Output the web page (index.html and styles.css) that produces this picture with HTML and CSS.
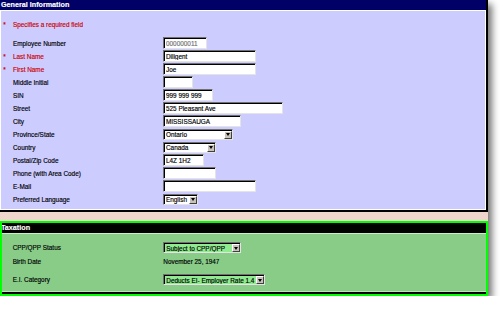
FILE: index.html
```html
<!DOCTYPE html>
<html>
<head>
<meta charset="utf-8">
<link rel="stylesheet" href="styles.css">
</head>
<body>
<div class="frame">
  <section class="gen">
    <div class="gen-head">General Information</div>
    <div class="gen-body">
      <div class="note"><span class="star">*</span>Specifies a required field</div>
      <div class="row"><span class="lbl"><span class="star"></span>Employee Number</span><input class="in w44 grey" value="000000011"></div>
      <div class="row"><span class="lbl red"><span class="star">*</span>Last Name</span><input class="in w93" value="Diligent"></div>
      <div class="row"><span class="lbl red"><span class="star">*</span>First Name</span><input class="in w93" value="Joe"></div>
      <div class="row"><span class="lbl"><span class="star"></span>Middle Initial</span><input class="in w30" value=""></div>
      <div class="row"><span class="lbl"><span class="star"></span>SIN</span><input class="in w50" value="999 999 999"></div>
      <div class="row"><span class="lbl"><span class="star"></span>Street</span><input class="in w120" value="525 Pleasant Ave"></div>
      <div class="row"><span class="lbl"><span class="star"></span>City</span><input class="in w78" value="MISSISSAUGA"></div>
      <div class="row"><span class="lbl"><span class="star"></span>Province/State</span><span class="sel w70"><span class="sel-text">Ontario</span><span class="sel-btn"></span></span></div>
      <div class="row"><span class="lbl"><span class="star"></span>Country</span><span class="sel w53"><span class="sel-text">Canada</span><span class="sel-btn"></span></span></div>
      <div class="row"><span class="lbl"><span class="star"></span>Postal/Zip Code</span><input class="in w41" value="L4Z 1H2"></div>
      <div class="row"><span class="lbl"><span class="star"></span>Phone (with Area Code)</span><input class="in w53" value=""></div>
      <div class="row"><span class="lbl"><span class="star"></span>E-Mail</span><input class="in w93" value=""></div>
      <div class="row"><span class="lbl"><span class="star"></span>Preferred Language</span><span class="sel w35"><span class="sel-text">English</span><span class="sel-btn"></span></span></div>
    </div>
  </section>
  <div class="gap"></div>
  <section class="tax">
    <div class="tax-head">Taxation</div>
    <div class="tax-body">
      <div class="trow"><span class="tlbl">CPP/QPP Status</span><span class="sel green w77"><span class="sel-text">Subject to CPP/QPP</span><span class="sel-btn"></span></span></div>
      <div class="trow"><span class="tlbl">Birth Date</span><span class="plain">November 25, 1947</span></div>
      <div class="trow third"><span class="tlbl">E.I. Category</span><span class="sel green w102"><span class="sel-text">Deducts EI- Employer Rate 1.4</span><span class="sel-btn"></span></span></div>
    </div>
  </section>
</div>
</body>
</html>
```

FILE: styles.css
```css
body {
  margin: 0;
  background: #fff;
  font-family: "Liberation Sans", Arial, sans-serif;
  color: #000;
  -webkit-text-stroke: 0.15px currentColor;
}

.frame {
  width: 488px;
  box-shadow: 4px 4px 7px rgba(0, 0, 0, 0.55);
}

.gen {
  border-right: 2px solid #000;
  border-bottom: 2px solid #000;
}

.gen-head {
  height: 10px;
  background: #000066;
  color: #fff;
  font-weight: bold;
  font-size: 7.2px;
  line-height: 10px;
  padding-left: 1px;
  white-space: nowrap;
}

.gen-body {
  background: #ccccff;
  border: 1px solid #fff;
  padding: 6.5px 0 3.5px;
}

.note {
  height: 13px;
  display: flex;
  align-items: center;
  margin-bottom: 6px;
  padding-left: 2.3px;
  color: #cc0000;
  font-size: 6.4px;
  white-space: nowrap;
}

.row {
  display: flex;
  align-items: center;
  height: 13px;
  font-size: 6.4px;
}

.lbl {
  width: 162px;
  flex: none;
  display: flex;
  align-items: center;
  padding-left: 2.3px;
  box-sizing: border-box;
  white-space: nowrap;
}

.star {
  display: inline-block;
  width: 9.7px;
  flex: none;
}

.red {
  color: #cc0000;
}

.in {
  box-sizing: border-box;
  height: 11.5px;
  margin: 0;
  padding: 0 0 0 2px;
  border: 1px solid;
  border-color: #707070 #e4e4e4 #e4e4e4 #707070;
  box-shadow: inset 1px 1px 0 #000;
  background: #fff;
  font-family: "Liberation Sans", Arial, sans-serif;
  font-size: 6.4px;
  color: #000;
  outline: none;
  -webkit-text-stroke: 0.15px currentColor;
}

.grey {
  color: #707070;
}

.w30 { width: 30px; }
.w35 { width: 35px; }
.w41 { width: 41px; }
.w44 { width: 44px; }
.w50 { width: 50px; }
.w53 { width: 53px; }
.w70 { width: 70px; }
.w77 { width: 77.5px; }
.w78 { width: 78px; }
.w93 { width: 93px; }
.w102 { width: 102px; }
.w120 { width: 120px; }

.sel {
  display: inline-flex;
  box-sizing: border-box;
  height: 11px;
  border: 1px solid;
  border-color: #707070 #e4e4e4 #e4e4e4 #707070;
  box-shadow: inset 1px 1px 0 #000;
  background: #fff;
  font-size: 6.4px;
  padding: 1px 0 0 1px;
}

.sel.green {
  background: #90ea90;
}

.sel-text {
  flex: 1;
  display: flex;
  align-items: center;
  padding-left: 1px;
  white-space: nowrap;
  overflow: hidden;
}

.sel-btn {
  width: 8px;
  flex: none;
  box-sizing: border-box;
  background: #c8c4bc;
  border: 1px solid;
  border-color: #fff #404040 #404040 #fff;
  display: flex;
  align-items: center;
  justify-content: center;
}

.sel-btn::after {
  content: "";
  border-left: 2.5px solid transparent;
  border-right: 2.5px solid transparent;
  border-top: 3px solid #000;
}

.gap {
  height: 8.5px;
  background: #efd6cd;
}

.tax {
  border: 2px solid #00ff00;
  border-bottom-width: 2.5px;
}

.tax-head {
  height: 10px;
  background: #000;
  color: #fff;
  font-weight: bold;
  font-size: 7.2px;
  line-height: 10px;
  text-indent: -1px;
  white-space: nowrap;
  overflow: hidden;
}

.tax-body {
  background: #88cc88;
  border-top: 1px solid #c8f0c8;
  border-bottom: 2.5px solid #000;
  box-shadow: inset 0 -1px 0 #b8e8b8;
  padding: 7px 0 5.5px;
}

.trow {
  display: flex;
  align-items: center;
  height: 14px;
  font-size: 6.4px;
}

.trow.third {
  margin-top: 4px;
}

.tlbl {
  width: 161.3px;
  flex: none;
  padding-left: 10.7px;
  box-sizing: border-box;
  white-space: nowrap;
}

.plain {
  white-space: nowrap;
}
```
